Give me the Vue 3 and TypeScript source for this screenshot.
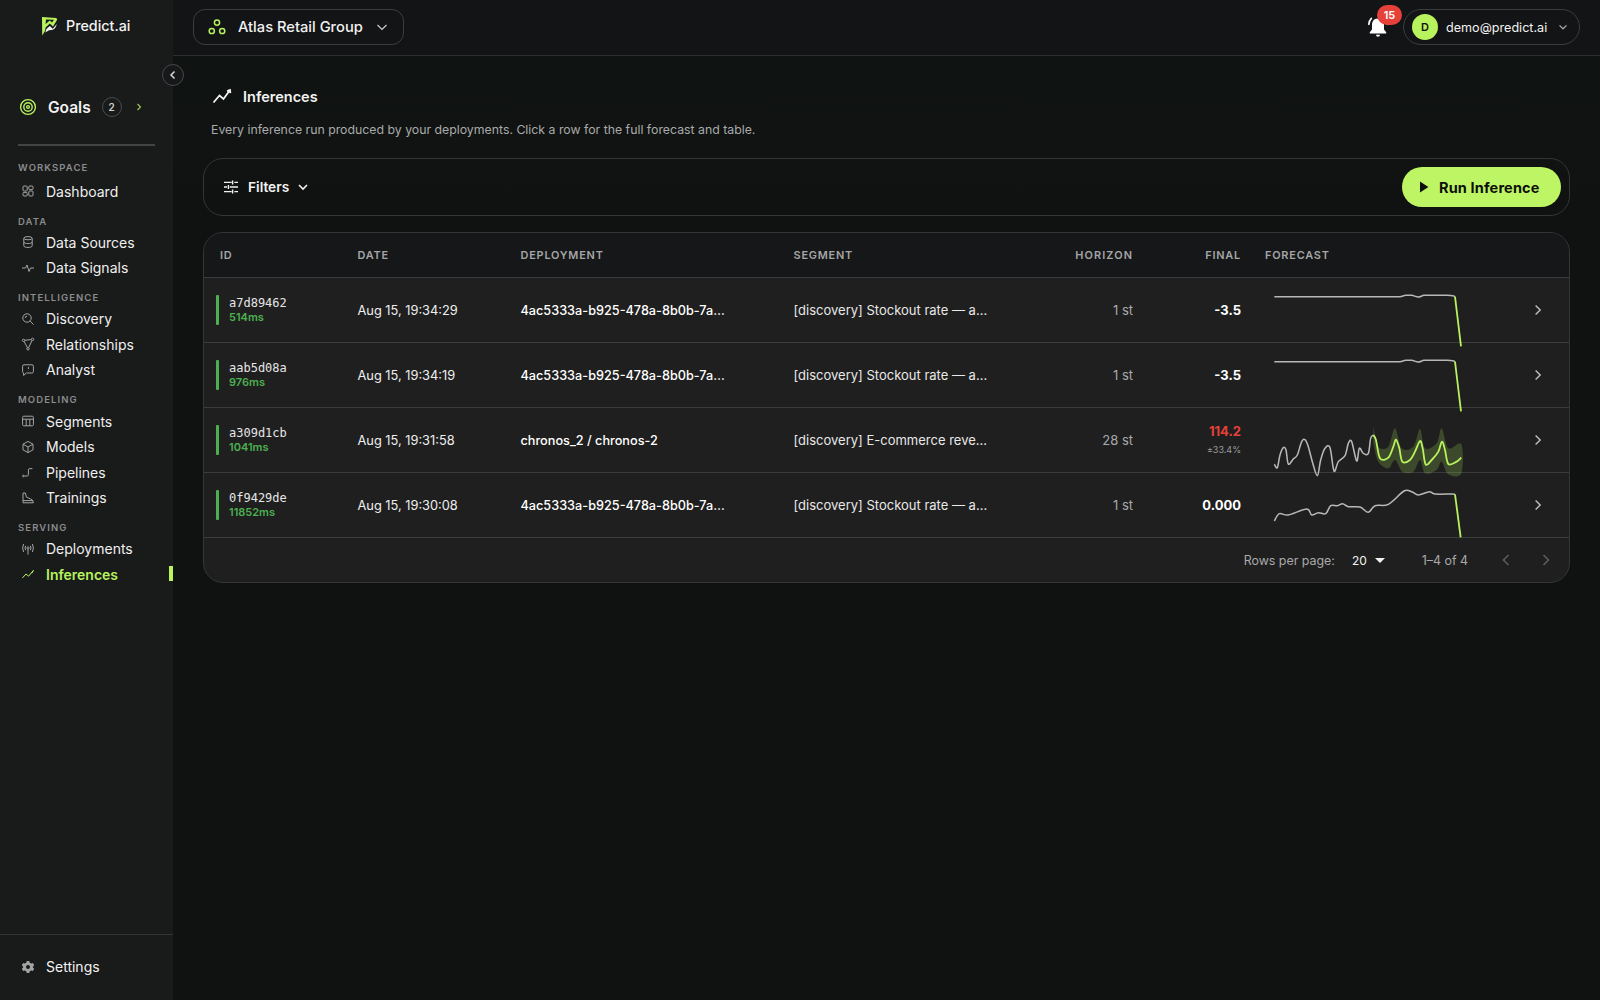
<script setup lang="ts">
interface NavItem {
  label: string
  icon: string
  active?: boolean
}

interface NavGroup {
  title: string
  items: NavItem[]
}

interface Chart {
  top: number
  history: number[][]
  forecast: number[][]
  band?: number[][]
}

interface Row {
  id: string
  ms: string
  date: string
  deployment: string
  segment: string
  horizon: string
  final: string
  spread?: string
  alert?: boolean
  chart: Chart
}

const groups: NavGroup[] = [
  { title: 'WORKSPACE', items: [{ label: 'Dashboard', icon: 'dashboard' }] },
  {
    title: 'DATA',
    items: [
      { label: 'Data Sources', icon: 'database' },
      { label: 'Data Signals', icon: 'pulse' },
    ],
  },
  {
    title: 'INTELLIGENCE',
    items: [
      { label: 'Discovery', icon: 'search' },
      { label: 'Relationships', icon: 'graph' },
      { label: 'Analyst', icon: 'chat' },
    ],
  },
  {
    title: 'MODELING',
    items: [
      { label: 'Segments', icon: 'table' },
      { label: 'Models', icon: 'cube' },
      { label: 'Pipelines', icon: 'steps' },
      { label: 'Trainings', icon: 'shoe' },
    ],
  },
  {
    title: 'SERVING',
    items: [
      { label: 'Deployments', icon: 'antenna' },
      { label: 'Inferences', icon: 'trend', active: true },
    ],
  },
]

const flatHistory = [
  [103, 80], [180, 80], [260, 80], [340, 80], [420, 80], [460, 80], [480, 80], [497, 76], [515, 76], [535, 81],
  [552, 76], [575, 76], [600, 76], [622, 76], [638, 77], [645, 80],
]

// chart points are in 3x pixels, the svg viewBox is scaled to match
const stockout: Chart = {
  top: 21,
  history: flatHistory,
  forecast: [[645, 80], [663, 229]],
}

const rows: Row[] = [
  {
    id: 'a7d89462',
    ms: '514ms',
    date: 'Aug 15, 19:34:29',
    deployment: '4ac5333a-b925-478a-8b0b-7a…',
    segment: '[discovery] Stockout rate — a…',
    horizon: '1 st',
    final: '-3.5',
    chart: stockout,
  },
  {
    id: 'aab5d08a',
    ms: '976ms',
    date: 'Aug 15, 19:34:19',
    deployment: '4ac5333a-b925-478a-8b0b-7a…',
    segment: '[discovery] Stockout rate — a…',
    horizon: '1 st',
    final: '-3.5',
    chart: stockout,
  },
  {
    id: 'a309d1cb',
    ms: '1041ms',
    date: 'Aug 15, 19:31:58',
    deployment: 'chronos_2 / chronos-2',
    segment: '[discovery] E-commerce reve…',
    horizon: '28 st',
    final: '114.2',
    spread: '±33.4%',
    alert: true,
    chart: {
      top: 6,
      history: [
        [103, 178], [112, 188], [120, 150], [130, 128], [138, 135], [145, 177], [160, 162], [172, 150],
        [185, 110], [195, 104], [205, 125], [217, 170], [232, 212], [242, 165], [255, 130], [270, 128],
        [282, 198], [295, 170], [315, 152], [325, 115], [335, 110], [350, 168], [358, 130], [370, 145],
        [385, 145], [392, 100], [400, 90],
      ],
      forecast: [
        [400, 90], [408, 105], [420, 160], [445, 158], [460, 125], [468, 104], [478, 130], [487, 170],
        [510, 165], [525, 140], [540, 108], [548, 130], [557, 178], [575, 165], [595, 140], [606, 110],
        [615, 135], [625, 177], [650, 170], [664, 158],
      ],
      band: [
        [400, 65], [415, 125], [445, 125], [465, 70], [485, 130], [520, 125], [540, 72], [555, 130],
        [590, 115], [605, 70], [625, 130], [664, 118], [664, 205], [625, 208], [605, 170], [590, 195],
        [555, 205], [540, 165], [520, 200], [487, 200], [465, 165], [445, 190], [415, 170], [400, 115],
      ],
    },
  },
  {
    id: '0f9429de',
    ms: '11852ms',
    date: 'Aug 15, 19:30:08',
    deployment: '4ac5333a-b925-478a-8b0b-7a…',
    segment: '[discovery] Stockout rate — a…',
    horizon: '1 st',
    final: '0.000',
    chart: {
      top: 201,
      history: [
        [103, 348], [118, 326], [145, 330], [200, 312], [215, 330], [235, 323], [257, 326], [272, 302],
        [292, 302], [308, 296], [325, 305], [360, 306], [385, 322], [405, 302], [445, 298], [492, 258],
        [515, 260], [535, 270], [568, 260], [585, 267], [635, 267], [645, 268],
      ],
      forecast: [[645, 268], [662, 397]],
    },
  },
]

// catmull-rom through the points so the sparkline reads as a curve
function toPath(points: number[][]) {
  let d = `M${points[0][0]} ${points[0][1]}`
  for (let i = 0; i < points.length - 1; i++) {
    const p0 = points[i - 1] ?? points[i]
    const p1 = points[i]
    const p2 = points[i + 1]
    const p3 = points[i + 2] ?? p2
    const c1 = [p1[0] + (p2[0] - p0[0]) / 6, p1[1] + (p2[1] - p0[1]) / 6]
    const c2 = [p2[0] - (p3[0] - p1[0]) / 6, p2[1] - (p3[1] - p1[1]) / 6]
    d += ` C${c1[0]} ${c1[1]} ${c2[0]} ${c2[1]} ${p2[0]} ${p2[1]}`
  }
  return d
}
</script>

<template>
  <div class="app">
    <aside class="sidebar">
      <div class="logo">
        <svg width="17" height="20" viewBox="0 0 17 20">
          <path d="M1 1 L15 2 Q16.5 2.4 16 4 L12 10.5 L8.8 7.6 L4.6 11.6 L4 15 L1.2 19.6 Z M5 3.6 L4.6 8 L8.8 4.6 L11 6.6 L13 3.8 Z" fill="#b8f35e" fill-rule="evenodd" />
          <path d="M4.4 16.4 L5.4 13 L8.8 10 L11.8 12.8 L15.8 8 Q14.8 12.8 11 14 L8 14.2 Z" fill="#f2f3f2" />
        </svg>
        <span>Predict.ai</span>
      </div>

      <button class="collapse" aria-label="Collapse">
        <svg width="10" height="10" viewBox="0 0 10 10"><path d="M6.5 1.5 L3 5 L6.5 8.5" /></svg>
      </button>

      <div class="goals">
        <svg width="18" height="18" viewBox="0 0 18 18" class="goals-icon">
          <circle cx="9" cy="9" r="7.4" />
          <circle cx="9" cy="9" r="4.2" />
          <circle cx="9" cy="9" r="1.4" />
        </svg>
        <span class="goals-label">Goals</span>
        <span class="goals-count">2</span>
        <svg width="8" height="10" viewBox="0 0 8 10" class="goals-arrow"><path d="M2.5 2 L5.5 5 L2.5 8" /></svg>
      </div>
      <div class="side-divider"></div>

      <nav class="nav">
        <section v-for="group in groups" :key="group.title" class="nav-group">
          <h4>{{ group.title }}</h4>
          <a v-for="item in group.items" :key="item.label" class="nav-item" :class="{ active: item.active }">
            <svg width="14" height="14" viewBox="0 0 14 14" class="nav-icon">
              <template v-if="item.icon === 'dashboard'">
                <rect x="2" y="2" width="4.2" height="5" rx="1" />
                <rect x="7.8" y="2" width="4.2" height="3.6" rx="1" />
                <rect x="2" y="8.4" width="4.2" height="3.6" rx="1" />
                <rect x="7.8" y="7" width="4.2" height="5" rx="1" />
              </template>
              <template v-else-if="item.icon === 'database'">
                <ellipse cx="7" cy="3.2" rx="4.2" ry="1.6" />
                <path d="M2.8 3.2 V10.8 C2.8 13 11.2 13 11.2 10.8 V3.2 M2.8 7 C2.8 9 11.2 9 11.2 7" />
              </template>
              <path v-else-if="item.icon === 'pulse'" d="M1 7 H4.5 L6 4 L8 10.5 L9.5 7 H13" />
              <template v-else-if="item.icon === 'search'">
                <circle cx="6" cy="6" r="4.2" />
                <path d="M9.2 9.2 L12.6 12.6 M4.2 6 A1.8 1.8 0 0 1 6 4.2" />
              </template>
              <template v-else-if="item.icon === 'graph'">
                <circle cx="2.6" cy="3.4" r="1.2" />
                <circle cx="11.6" cy="2.4" r="1.2" />
                <circle cx="7" cy="11.8" r="1.2" />
                <path d="M3.8 3.3 L10.4 2.6 M3.2 4.5 L6.4 10.7 M11 3.5 L7.6 10.7" />
              </template>
              <template v-else-if="item.icon === 'chat'">
                <path d="M3 1.8 H11 Q12.4 1.8 12.4 3.2 V8.6 Q12.4 10 11 10 H5.4 L2.6 12.4 V10 Q1.6 9.8 1.6 8.6 V3.2 Q1.6 1.8 3 1.8 Z" />
                <path d="M7.4 4 V6 M7.4 7.6 V7.9" />
              </template>
              <template v-else-if="item.icon === 'table'">
                <rect x="1.6" y="2.2" width="10.8" height="9.6" rx="1.2" />
                <path d="M1.6 5.2 H12.4 M5.2 5.2 V11.8 M8.8 5.2 V11.8" />
              </template>
              <template v-else-if="item.icon === 'cube'">
                <path d="M7 1.4 L12 4.2 V9.8 L7 12.6 L2 9.8 V4.2 Z" />
                <path d="M2 4.2 L7 7 L12 4.2 M7 7 V12.6" />
              </template>
              <template v-else-if="item.icon === 'steps'">
                <path d="M3.4 11 H6.2 Q7.4 11 7.4 9.8 V5 Q7.4 3.6 8.8 3.6 H11.4" />
                <circle cx="2.4" cy="11" r="0.8" />
              </template>
              <path v-else-if="item.icon === 'shoe'" d="M2 2 H4.4 L5.4 6 L9.6 8 Q12.4 8.8 12.4 11.8 H2 Z M2 9.6 H12" />
              <template v-else-if="item.icon === 'antenna'">
                <circle cx="7" cy="6" r="1.1" />
                <path d="M7 7.2 V12.6 M4.6 3.8 Q3.4 6 4.6 8.2 M9.4 3.8 Q10.6 6 9.4 8.2 M2.6 2 Q0.6 6 2.6 10 M11.4 2 Q13.4 6 11.4 10" />
              </template>
              <path v-else-if="item.icon === 'trend'" d="M1.4 11 L5 7 L7.6 9.2 L12.4 3.4 M10.8 6.2 L12.4 3.4" />
            </svg>
            <span>{{ item.label }}</span>
          </a>
        </section>
      </nav>

      <div class="side-footer">
        <svg width="14" height="14" viewBox="0 0 14 14" class="gear">
          <path d="M5.7 1 H8.3 L8.7 2.7 L10.2 3.5 L11.9 3 L13.2 5.2 L11.9 6.4 V7.6 L13.2 8.8 L11.9 11 L10.2 10.5 L8.7 11.3 L8.3 13 H5.7 L5.3 11.3 L3.8 10.5 L2.1 11 L0.8 8.8 L2.1 7.6 V6.4 L0.8 5.2 L2.1 3 L3.8 3.5 L5.3 2.7 Z M7 5 A2 2 0 1 0 7 9 A2 2 0 1 0 7 5 Z" fill-rule="evenodd" />
        </svg>
        <span>Settings</span>
      </div>
    </aside>

    <div class="main">
      <header class="topbar">
        <button class="workspace">
          <svg width="18" height="18" viewBox="0 0 18 18" class="workspace-icon">
            <circle cx="9" cy="4.6" r="2.6" />
            <circle cx="3.8" cy="13" r="2.6" />
            <circle cx="14.2" cy="13" r="2.6" />
          </svg>
          <span>Atlas Retail Group</span>
          <svg width="12" height="12" viewBox="0 0 12 12" class="chev"><path d="M1.5 4 L6 8.4 L10.5 4" /></svg>
        </button>
        <div class="top-right">
          <div class="bell">
            <svg width="24" height="24" viewBox="0 0 24 24">
              <path d="M12 3.5 C8 3.5 6 6.4 6 9.6 V14.4 L3.8 17.2 V18.6 H20.2 V17.2 L18 14.4 V9.6 C18 6.4 16 3.5 12 3.5 Z M10 19.8 H14 Q14 21.8 12 21.8 Q10 21.8 10 19.8 Z" fill="#fff" />
              <path d="M5.4 3.4 Q3 5.8 2.8 9.4 M18.6 3.4 Q21 5.8 21.2 9.4" fill="none" stroke="#fff" stroke-width="1.6" stroke-linecap="round" />
            </svg>
            <span class="bell-badge">15</span>
          </div>
          <div class="user">
            <span class="avatar">D</span>
            <span class="user-mail">demo@predict.ai</span>
            <svg width="10" height="10" viewBox="0 0 10 10" class="chev dim"><path d="M1.5 3.4 L5 6.8 L8.5 3.4" /></svg>
          </div>
        </div>
      </header>

      <main class="content">
        <div class="title-row">
          <svg width="20" height="20" viewBox="0 0 20 20" class="title-icon"><path d="M1.5 16.5 L7.5 9.5 L11.5 13 L18 4 M15 5 L18 4 L18.4 7.2" /></svg>
          <h1>Inferences</h1>
        </div>
        <p class="subtitle">Every inference run produced by your deployments. Click a row for the full forecast and table.</p>

        <div class="toolbar">
          <button class="filters">
            <svg width="16" height="16" viewBox="0 0 16 16" class="filters-icon">
              <path d="M1 3.4 H8.6 M11.4 3.4 H15 M1 8 H4 M6.8 8 H15 M1 12.6 H8.6 M11.4 12.6 H15 M9.6 1.4 V5.4 M5.4 6 V10 M9.6 10.6 V14.6" />
            </svg>
            <span>Filters</span>
            <svg width="10" height="10" viewBox="0 0 10 10" class="chev bright"><path d="M1 3 L5 7 L9 3" /></svg>
          </button>
          <button class="run">
            <svg width="12" height="12" viewBox="0 0 12 12"><path d="M2 0.6 L10.4 6 L2 11.4 Z" fill="#0d0f0a" /></svg>
            <span>Run Inference</span>
          </button>
        </div>

        <div class="table">
          <div class="grid head">
            <div>ID</div>
            <div>DATE</div>
            <div>DEPLOYMENT</div>
            <div>SEGMENT</div>
            <div class="num">HORIZON</div>
            <div class="num">FINAL</div>
            <div class="forecast-head">FORECAST</div>
          </div>
          <div v-for="row in rows" :key="row.id" class="grid row">
            <div class="id-cell">
              <span class="status"></span>
              <div>
                <div class="run-id">{{ row.id }}</div>
                <div class="run-ms">{{ row.ms }}</div>
              </div>
            </div>
            <div class="date">{{ row.date }}</div>
            <div class="deployment">{{ row.deployment }}</div>
            <div class="segment">{{ row.segment }}</div>
            <div class="num horizon">{{ row.horizon }}</div>
            <div class="num final">
              <div :class="{ alert: row.alert }">{{ row.final }}</div>
              <div v-if="row.spread" class="spread">{{ row.spread }}</div>
            </div>
            <div class="spark-cell">
              <svg width="210" height="64" :viewBox="`90 ${row.chart.top + 3} 630 192`" class="spark">
                <path v-if="row.chart.band" :d="toPath(row.chart.band) + ' Z'" class="band" />
                <path :d="toPath(row.chart.history)" class="past" />
                <path :d="toPath(row.chart.forecast)" class="future" />
              </svg>
              <svg width="12" height="12" viewBox="0 0 12 12" class="row-arrow"><path d="M3.6 1.5 L8.2 6 L3.6 10.5" /></svg>
            </div>
          </div>
          <div class="pager">
            <span class="pager-label">Rows per page:</span>
            <span class="pager-size">20</span>
            <span class="caret"></span>
            <span class="pager-range">1–4 of 4</span>
            <svg width="14" height="14" viewBox="0 0 14 14" class="pager-arrow"><path d="M9.5 2 L4.5 7 L9.5 12" /></svg>
            <svg width="14" height="14" viewBox="0 0 14 14" class="pager-arrow"><path d="M4.5 2 L9.5 7 L4.5 12" /></svg>
          </div>
        </div>
      </main>
    </div>
  </div>
</template>

<style>
html,
body {
  margin: 0;
  background: #101111;
}
</style>

<style scoped>
.app {
  display: flex;
  height: 1000px;
  overflow: hidden;
  color: #f2f2f2;
  font-family: "Inter", "Noto Sans", "Liberation Sans", sans-serif;
  background: #101111;
}

button {
  font-family: inherit;
  color: inherit;
  background: none;
  cursor: pointer;
}

/* sidebar */
.sidebar {
  position: relative;
  display: flex;
  flex-direction: column;
  flex: 0 0 173px;
  background: #191a1a;
}

.logo {
  display: flex;
  align-items: center;
  gap: 8px;
  height: 21px;
  padding: 15px 0 0 41px;
  font-size: 14.3px;
  font-weight: 500;
}

.collapse {
  position: absolute;
  top: 64px;
  left: 162px;
  z-index: 2;
  display: flex;
  align-items: center;
  justify-content: center;
  width: 22px;
  height: 22px;
  padding: 0;
  border: 1px solid #474849;
  border-radius: 50%;
  background: #17181a;
}

.collapse path {
  fill: none;
  stroke: #d8d8d8;
  stroke-width: 1.5;
}

.goals {
  display: flex;
  align-items: center;
  height: 22px;
  margin-top: 60px;
  padding-left: 19px;
}

.goals-icon circle {
  fill: none;
  stroke: #b8f35e;
  stroke-width: 1.4;
}

.goals-label {
  margin-left: 11px;
  font-size: 15.5px;
  font-weight: 600;
}

.goals-count {
  display: flex;
  align-items: center;
  justify-content: center;
  width: 18px;
  height: 18px;
  margin-left: 11px;
  border: 1px solid #4a4b4c;
  border-radius: 50%;
  color: #cfcfcf;
  font-size: 10px;
  font-weight: 600;
}

.goals-arrow {
  margin-left: 13px;
}

.goals-arrow path {
  fill: none;
  stroke: #9cc455;
  stroke-width: 1.2;
}

.side-divider {
  height: 2px;
  margin: 26px 18px 0;
  background: #434445;
}

.nav {
  display: flex;
  flex-direction: column;
  padding: 15px 18px 0;
}

.nav-group h4 {
  height: 14px;
  margin: 0;
  color: #8b8c8d;
  font-size: 9.5px;
  font-weight: 600;
  line-height: 14px;
  letter-spacing: 1.1px;
}

.nav-group + .nav-group {
  margin-top: 10.6px;
}

.nav-item {
  display: flex;
  align-items: center;
  gap: 11px;
  height: 25.5px;
  padding-left: 3px;
  font-size: 14px;
  color: #f0f0f0;
}

.nav-group h4 + .nav-item {
  margin-top: 1px;
}

.nav-group:first-child h4 + .nav-item {
  margin-top: 3.5px;
}

.nav-icon {
  flex: none;
  fill: none;
  stroke: #a3a4a5;
  stroke-width: 1;
}

.nav-item.active {
  position: relative;
  color: #b8f35e;
  font-weight: 600;
}

.nav-item.active .nav-icon {
  stroke: #b8f35e;
}

.nav-item.active::after {
  content: "";
  position: absolute;
  top: 5px;
  right: -18px;
  width: 4px;
  height: 15px;
  background: #b8f35e;
}

.side-footer {
  display: flex;
  align-items: center;
  gap: 11px;
  height: 63px;
  margin-top: auto;
  padding-bottom: 2px;
  padding-left: 21px;
  border-top: 1px solid #333435;
  font-size: 14px;
}

.gear {
  fill: #a3a4a5;
}

/* top bar */
.main {
  display: flex;
  flex-direction: column;
  flex: 1;
  min-width: 0;
  background: linear-gradient(180deg, #0e1210 0, #101311 150px, #101111 260px);
}

.topbar {
  display: flex;
  align-items: center;
  justify-content: space-between;
  flex: 0 0 56px;
  box-sizing: border-box;
  padding: 0 20px 1px 20px;
  border-bottom: 1px solid #2d2e2f;
  background: #131415;
}

.workspace {
  display: flex;
  align-items: center;
  box-sizing: border-box;
  width: 211px;
  height: 36px;
  padding: 0 0 0 14px;
  border: 1px solid #3c3d3e;
  border-radius: 12px;
  font-size: 14.7px;
  font-weight: 500;
}

.workspace-icon circle {
  fill: none;
  stroke: #b8f35e;
  stroke-width: 1.5;
}

.workspace span {
  margin: 0 13px 0 12px;
}

.chev {
  flex: none;
  fill: none;
}

.chev path {
  fill: none;
  stroke: #c8c8c8;
  stroke-width: 1.3;
}

.chev.dim path {
  stroke: #a8a8a8;
}

.chev.bright path {
  stroke: #f2f2f2;
  stroke-width: 1.6;
}

.top-right {
  display: flex;
  align-items: center;
  gap: 13px;
}

.bell {
  position: relative;
  width: 24px;
  height: 24px;
}

.bell-badge {
  position: absolute;
  top: -10px;
  left: 11px;
  width: 25px;
  height: 20px;
  border-radius: 10px;
  background: #e5413a;
  color: #fff;
  font-size: 11px;
  font-weight: 600;
  line-height: 20px;
  text-align: center;
}

.user {
  display: flex;
  align-items: center;
  box-sizing: border-box;
  width: 177px;
  height: 36px;
  padding-left: 8px;
  border: 1px solid #3c3d3e;
  border-radius: 18px;
}

.avatar {
  display: flex;
  align-items: center;
  justify-content: center;
  flex: none;
  width: 26px;
  height: 26px;
  border-radius: 50%;
  background: #b8f35e;
  color: #10120c;
  font-size: 11px;
  font-weight: 600;
}

.user-mail {
  width: 112px;
  margin-left: 8px;
  font-size: 12.6px;
}

/* content */
.content {
  padding: 29px 30px 0 30px;
}

.title-row {
  display: flex;
  align-items: center;
  gap: 11px;
  height: 22px;
  padding-left: 9px;
}

.title-icon path {
  fill: none;
  stroke: #f2f2f2;
  stroke-width: 1.8;
}

h1 {
  margin: 0;
  font-size: 14.5px;
  font-weight: 600;
}

.subtitle {
  margin: 14px 0 0 8px;
  color: #a9aaab;
  font-size: 12.3px;
  line-height: 18px;
}

.toolbar {
  display: flex;
  align-items: center;
  justify-content: space-between;
  box-sizing: border-box;
  height: 58px;
  margin-top: 19px;
  padding: 0 8px 0 19px;
  border: 1px solid #343536;
  border-radius: 20px;
}

.filters {
  display: flex;
  align-items: center;
  gap: 9px;
  padding: 0;
  border: 0;
  font-size: 13.7px;
  font-weight: 600;
}

.filters-icon path {
  fill: none;
  stroke: #f2f2f2;
  stroke-width: 1.4;
}

.run {
  display: flex;
  align-items: center;
  gap: 9px;
  box-sizing: border-box;
  width: 159px;
  height: 40px;
  padding: 0 0 0 16px;
  border: 0;
  border-radius: 20px;
  background: #bdf564;
  color: #0d0f0a;
  font-size: 14.5px;
  font-weight: 700;
  letter-spacing: 0.15px;
}

/* table */
.table {
  margin-top: 16px;
  overflow: hidden;
  border: 1px solid #343536;
  border-radius: 20px;
  background: #1f1f1f;
}

.grid {
  display: grid;
  grid-template-columns: 137.5px 163px 273px 227.5px 144px 108px 1fr;
  align-items: center;
}

.grid > div {
  box-sizing: border-box;
  padding: 0 16px;
}

.head {
  height: 44px;
  background: #161718;
  color: #a5a6a7;
  font-size: 10.9px;
  font-weight: 600;
  letter-spacing: 0.8px;
}

.head .num:nth-child(5) {
  letter-spacing: 1.1px;
}

.num {
  text-align: right;
}

.grid > .forecast-head {
  padding-left: 8px;
}

.row {
  height: 65px;
  box-sizing: border-box;
  border-top: 1px solid #3a3b3c;
  font-size: 13px;
}

.id-cell {
  display: flex;
  align-items: center;
  gap: 10px;
}

.grid > .id-cell {
  padding-left: 12px;
}

.status {
  width: 3px;
  height: 30px;
  border-radius: 1px;
  background: #4caf50;
}

.run-id {
  color: #e6e6e6;
  font-family: "DejaVu Sans Mono", "Liberation Mono", monospace;
  font-size: 12px;
  line-height: 15px;
}

.run-ms {
  color: #4caf50;
  font-size: 11px;
  font-weight: 600;
  line-height: 13px;
}

.date {
  color: #efefef;
  font-size: 12.8px;
}

.deployment {
  color: #fff;
  font-weight: 500;
  font-size: 12.7px;
}

.segment {
  color: #e8e8e8;
  white-space: nowrap;
}

.horizon {
  color: #a9aaab;
}

.final {
  color: #fff;
  font-weight: 700;
}

.alert {
  color: #e5413a;
}

.spread {
  margin-top: 5.5px;
  margin-bottom: 2px;
  color: #9a9b9c;
  font-size: 9px;
  font-weight: 400;
}

.grid > .spark-cell {
  display: flex;
  align-items: center;
  justify-content: space-between;
  height: 64px;
  padding: 0 25px 0 13px;
}

.spark {
  display: block;
  overflow: visible;
}

.band {
  fill: rgba(184, 243, 94, 0.2);
}

.past {
  fill: none;
  stroke: #b8b8b8;
  stroke-width: 4.6;
  stroke-linejoin: round;
}

.future {
  fill: none;
  stroke: #b8f35e;
  stroke-width: 5.4;
  stroke-linejoin: round;
}

.row-arrow path {
  fill: none;
  stroke: #c0c0c0;
  stroke-width: 1.4;
}

.pager {
  display: flex;
  align-items: center;
  justify-content: flex-end;
  height: 45px;
  box-sizing: border-box;
  padding-right: 16px;
  border-top: 1px solid #3a3b3c;
  color: #a9aaab;
  font-size: 12.4px;
}

.pager-size {
  margin-left: 17px;
  color: #f2f2f2;
  font-size: 12px;
}

.caret {
  width: 0;
  height: 0;
  margin-left: 8px;
  border-top: 5px solid #f2f2f2;
  border-right: 5px solid transparent;
  border-left: 5px solid transparent;
}

.pager-range {
  margin: 0 5px 0 37px;
}

.pager-arrow {
  margin-left: 26px;
}

.pager-arrow path {
  fill: none;
  stroke: #5c5d5e;
  stroke-width: 1.6;
}
</style>
